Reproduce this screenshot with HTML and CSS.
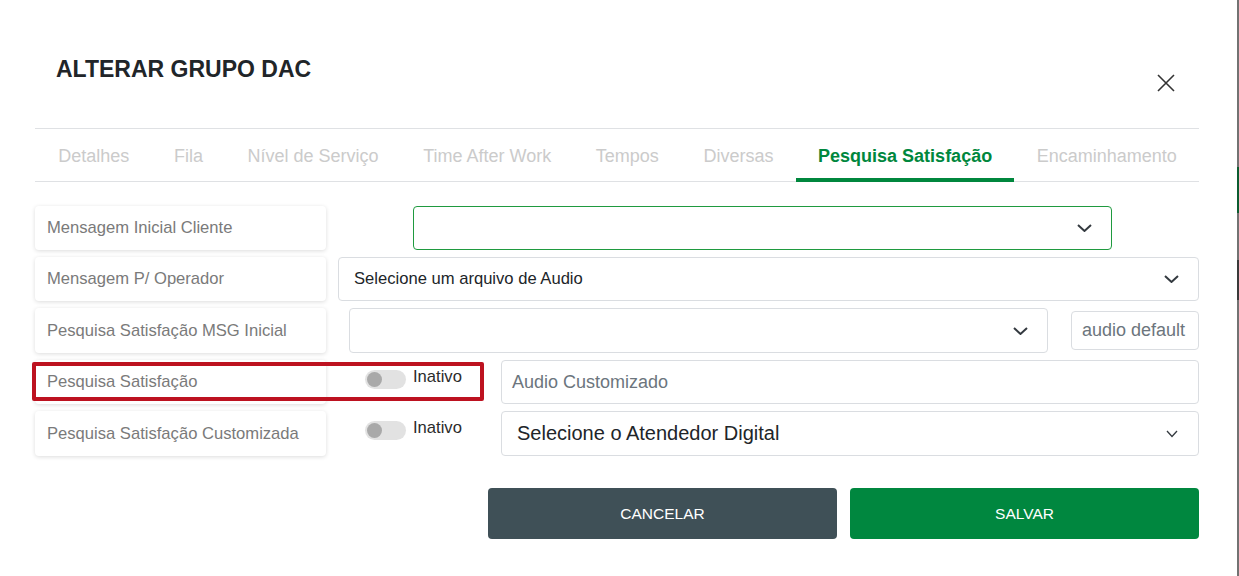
FILE: index.html
```html
<!DOCTYPE html>
<html lang="pt-BR">
<head>
<meta charset="utf-8">
<title>Alterar Grupo DAC</title>
<link rel="stylesheet" href="styles.css">
</head>
<body>
<div class="modal">
  <header class="modal-header">
    <h1 class="title">ALTERAR GRUPO DAC</h1>
    <button class="close" aria-label="Fechar">
      <svg width="18" height="18" viewBox="0 0 18 18"><path d="M1 1L17 17M17 1L1 17" fill="none" stroke="#333" stroke-width="1.6"/></svg>
    </button>
  </header>
  <div class="modal-body">
    <nav class="tabs">
      <span class="tab">Detalhes</span>
      <span class="tab">Fila</span>
      <span class="tab">Nível de Serviço</span>
      <span class="tab">Time After Work</span>
      <span class="tab">Tempos</span>
      <span class="tab">Diversas</span>
      <span class="tab active">Pesquisa Satisfação</span>
      <span class="tab">Encaminhamento</span>
    </nav>

    <div class="form">
      <div class="row">
        <div class="label-card">Mensagem Inicial Cliente</div>
        <div class="field field-green field-r1">
          <span></span>
          <svg class="chev" width="15" height="8" viewBox="0 0 15 8"><path d="M1 1l6.5 6 6.5-6" fill="none" stroke="#343a40" stroke-width="2"/></svg>
        </div>
      </div>
      <div class="row">
        <div class="label-card">Mensagem P/ Operador</div>
        <div class="field field-r2">
          <span>Selecione um arquivo de Audio</span>
          <svg class="chev" width="15" height="8" viewBox="0 0 15 8"><path d="M1 1l6.5 6 6.5-6" fill="none" stroke="#343a40" stroke-width="2"/></svg>
        </div>
      </div>
      <div class="row tall">
        <div class="label-card">Pesquisa Satisfação MSG Inicial</div>
        <div class="field field-r3">
          <span></span>
          <svg class="chev" width="15" height="8" viewBox="0 0 15 8"><path d="M1 1l6.5 6 6.5-6" fill="none" stroke="#343a40" stroke-width="2"/></svg>
        </div>
        <div class="field audio-default">audio default</div>
      </div>
      <div class="row">
        <div class="label-card">Pesquisa Satisfação</div>
        <div class="toggle-group">
          <span class="toggle"><span class="knob"></span></span>
          <span class="toggle-text">Inativo</span>
        </div>
        <div class="field field-wide placeholder">Audio Customizado</div>
        <div class="highlight"></div>
      </div>
      <div class="row tall">
        <div class="label-card">Pesquisa Satisfação Customizada</div>
        <div class="toggle-group">
          <span class="toggle"><span class="knob"></span></span>
          <span class="toggle-text">Inativo</span>
        </div>
        <div class="field field-wide big">
          <span>Selecione o Atendedor Digital</span>
          <svg class="chev-sm" width="12" height="8" viewBox="0 0 12 8"><path d="M1 1l5 5.5 5-5.5" fill="none" stroke="#343a40" stroke-width="1.3"/></svg>
        </div>
      </div>
    </div>

    <div class="actions">
      <button class="btn btn-cancel">CANCELAR</button>
      <button class="btn btn-save">SALVAR</button>
    </div>
  </div>
</div>
<div class="edge"><span class="edge-green"></span><span class="edge-dark"></span></div>
</body>
</html>
```
FILE: styles.css
```css
html, body {
  margin: 0;
  height: 100%;
}
body {
  display: flex;
  font-family: "Liberation Sans", Arial, sans-serif;
  background: #fff;
  overflow: hidden;
}
.modal {
  flex: 1;
  min-width: 0;
  background: #fff;
}
.modal-header {
  display: flex;
  justify-content: space-between;
  align-items: flex-start;
  height: 128px;
  box-sizing: border-box;
  padding: 58px 62px 0 56px;
}
.title {
  margin: 0;
  font-size: 23px;
  line-height: 23px;
  font-weight: 700;
  color: #212529;
}
.close {
  margin-top: 16px;
  width: 18px;
  height: 18px;
  padding: 0;
  border: 0;
  background: none;
  display: block;
}
.close svg { display: block; }
.modal-body {
  padding: 0 38px 0 35px;
}
.tabs {
  display: flex;
  height: 52px;
  border-top: 1px solid #dfe1e4;
  border-bottom: 1px solid #dfe1e4;
  padding-left: 1px;
}
.tab {
  padding: 6px 22.3px 0;
  line-height: 43px;
  font-size: 18px;
  color: #cbcbcb;
  border-bottom: 4px solid transparent;
  margin-bottom: -1px;
  white-space: nowrap;
}
.tab.active {
  color: #00873d;
  font-weight: 700;
  border-bottom-color: #00873d;
}
.form {
  display: flex;
  flex-direction: column;
  gap: 7px;
  margin-top: 24px;
}
.row {
  display: flex;
  height: 44px;
  position: relative;
}
.row.tall { height: 45px; }
.label-card {
  flex: none;
  width: 291px;
  box-sizing: border-box;
  display: flex;
  align-items: center;
  padding-left: 12px;
  background: #fff;
  border-radius: 4px;
  box-shadow: 0 1px 4px rgba(0, 0, 0, 0.14);
  font-size: 16.6px;
  color: #7a7a7a;
  white-space: nowrap;
}
.field {
  box-sizing: border-box;
  display: flex;
  align-items: center;
  justify-content: space-between;
  background: #fff;
  border: 1px solid #dadde1;
  border-radius: 4px;
  padding: 0 19px 0 15px;
  font-size: 16.6px;
  color: #212529;
  white-space: nowrap;
}
.field-green {
  border-color: #1f9a3f;
}
.field-r1 {
  flex: none;
  margin-left: 87px;
  width: 699px;
}
.field-r2 {
  margin-left: 12px;
  flex: 1;
}
.field-r3 {
  flex: none;
  margin-left: 23px;
  width: 699px;
}
.audio-default {
  margin-left: 23px;
  flex: 1;
  min-width: 0;
  height: 39px;
  align-self: center;
  padding: 0 0 0 10px;
  font-size: 18px;
  color: #6c757d;
  overflow: hidden;
}
.toggle-group {
  flex: 1;
  display: flex;
  align-items: flex-start;
  padding-left: 39px;
}
.toggle {
  margin-top: 10px;
  width: 41px;
  height: 19px;
  border-radius: 10px;
  background: #e2e2e2;
  display: flex;
  align-items: center;
  padding-left: 2px;
  box-sizing: border-box;
}
.knob {
  width: 15px;
  height: 15px;
  border-radius: 50%;
  background: #a9a9a9;
}
.toggle-text {
  margin-top: 8.5px;
  margin-left: 7px;
  font-size: 16.6px;
  line-height: 1;
  color: #2b2b2b;
}
.field-wide {
  flex: none;
  width: 698px;
}
.placeholder {
  padding-left: 10px;
  font-size: 18px;
  color: #6c757d;
}
.big {
  font-size: 20px;
  padding-right: 20px;
}
.chev, .chev-sm { display: block; flex: none; }
.highlight {
  position: absolute;
  left: -3px;
  top: 2px;
  width: 452px;
  height: 39px;
  box-sizing: border-box;
  border: 4px solid #bd1220;
  border-radius: 2px;
}
.actions {
  display: flex;
  justify-content: flex-end;
  gap: 13px;
  margin-top: 32px;
}
.btn {
  width: 349px;
  height: 51px;
  border: 0;
  border-radius: 4px;
  color: #fff;
  font-family: inherit;
  font-size: 15.5px;
  padding: 0;
}
.btn-cancel { background: #3f5057; }
.btn-save { background: #00873f; }
.edge {
  flex: none;
  width: 2px;
  background: #727272;
  display: flex;
  flex-direction: column;
}
.edge-green {
  margin-top: 167px;
  height: 46px;
  background: #0b5c30;
}
.edge-dark {
  margin-top: 47px;
  height: 40px;
  background: #3a3a3a;
}
```
